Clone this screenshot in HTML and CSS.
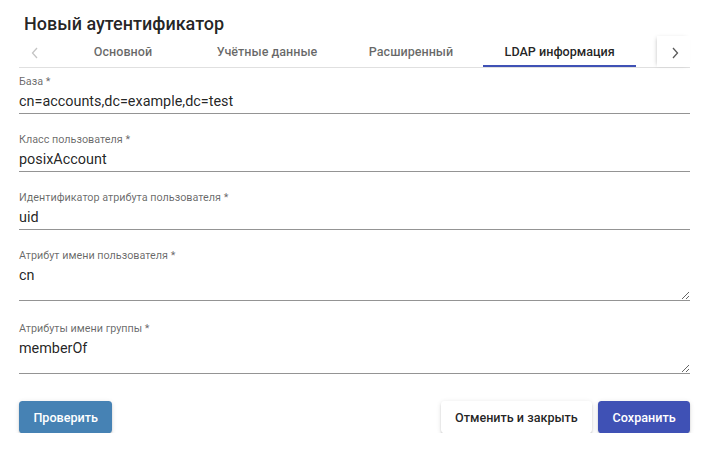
FILE: index.html
```html
<!DOCTYPE html>
<html lang="ru">
<head>
  <meta charset="UTF-8">
  <meta name="viewport" content="width=device-width, initial-scale=1.0">
  <title>Новый аутентификатор</title>
  <link rel="stylesheet" href="styles.css">
</head>
<body>
<div class="dialog">
  <h2 class="title">Новый аутентификатор</h2>

  <div class="tabs">
    <div class="pager pager-left">
      <svg width="10" height="12" viewBox="0 0 10 12"><polyline points="7,1 2.5,6 7,11" fill="none" stroke="#c4c4c4" stroke-width="1.3"/></svg>
    </div>
    <div class="tab-list">
      <div class="tab">Основной</div>
      <div class="tab">Учётные данные</div>
      <div class="tab">Расширенный</div>
      <div class="tab active">LDAP информация</div>
    </div>
    <div class="pager pager-right">
      <svg width="10" height="12" viewBox="0 0 10 12"><polyline points="3,1 7.5,6 3,11" fill="none" stroke="#5a5a5a" stroke-width="1.3"/></svg>
    </div>
  </div>

  <div class="form">
    <div class="field">
      <label>База *</label>
      <input type="text" value="cn=accounts,dc=example,dc=test">
    </div>
    <div class="field">
      <label>Класс пользователя *</label>
      <input type="text" value="posixAccount">
    </div>
    <div class="field">
      <label>Идентификатор атрибута пользователя *</label>
      <input type="text" value="uid">
    </div>
    <div class="field field-area">
      <label>Атрибут имени пользователя *</label>
      <textarea>cn</textarea>
    </div>
    <div class="field field-area">
      <label>Атрибуты имени группы *</label>
      <textarea>memberOf</textarea>
    </div>
  </div>

  <div class="actions">
    <button class="btn btn-test">Проверить</button>
    <div class="actions-right">
      <button class="btn btn-cancel">Отменить и закрыть</button>
      <button class="btn btn-save">Сохранить</button>
    </div>
  </div>
</div>
</body>
</html>
```

FILE: styles.css
```css
body {
  margin: 0;
  background: #fff;
  font-family: Roboto, "Noto Sans", sans-serif;
  color: rgba(0,0,0,0.87);
}
.dialog {
  padding: 12px 18px 0 19px;
}
.title {
  margin: 0;
  padding-left: 5px;
  font-size: 18px;
  font-weight: 500;
  line-height: 24px;
}

/* tab header */
.tabs {
  display: flex;
  height: 31px;
  border-bottom: 1px solid #e0e0e0;
}
.pager {
  flex: none;
  width: 32px;
  display: flex;
  align-items: center;
  justify-content: center;
  padding-top: 2px;
  box-sizing: border-box;
}
.pager-right {
  width: 33px;
  padding-left: 3px;
  box-shadow: -2px 0 4px -2px rgba(0,0,0,0.25);
}
.tab-list {
  flex: 1;
  display: flex;
  overflow: hidden;
}
.tab {
  flex: none;
  min-width: 144px;
  padding: 2px 21.6px 0;
  box-sizing: border-box;
  border-bottom: 2px solid transparent;
  display: flex;
  align-items: center;
  justify-content: center;
  font-size: 12.6px;
  font-weight: 500;
  color: rgba(0,0,0,0.6);
}
.tab.active {
  color: rgba(0,0,0,0.87);
  border-bottom-color: #3f51b5;
}

/* fields */
.form {
  padding-top: 7px;
}
.field {
  margin-bottom: 19px;
}
.field-area {
  margin-bottom: 21px;
}
.field label {
  display: block;
  font-size: 10.8px;
  line-height: 14px;
  color: rgba(0,0,0,0.6);
  margin-bottom: 4px;
}
.field input,
.field textarea {
  display: block;
  width: 100%;
  box-sizing: border-box;
  margin: 0;
  padding: 0 0 2px;
  border: none;
  border-bottom: 1px solid #949494;
  outline: none;
  background: transparent;
  font-family: Roboto, "Noto Sans", sans-serif;
  font-size: 14.4px;
  line-height: 18px;
  color: rgba(0,0,0,0.87);
}
.field textarea {
  height: 34px;
  resize: vertical;
}

/* buttons */
.actions {
  display: flex;
  justify-content: space-between;
  margin-top: 27px;
}
.actions-right {
  display: flex;
  gap: 6px;
}
.btn {
  height: 32px;
  padding: 0 14.4px;
  border: none;
  border-radius: 3.6px;
  font-family: Roboto, "Noto Sans", sans-serif;
  font-size: 12.6px;
  font-weight: 500;
  cursor: pointer;
  box-shadow: 0 3px 1px -2px rgba(0,0,0,0.2), 0 2px 2px 0 rgba(0,0,0,0.14), 0 1px 5px 0 rgba(0,0,0,0.12);
}
.btn-test {
  background: #4682b4;
  color: #fff;
}
.btn-cancel {
  background: #fff;
  color: rgba(0,0,0,0.87);
}
.btn-save {
  background: #3f51b5;
  color: #fff;
}
```
